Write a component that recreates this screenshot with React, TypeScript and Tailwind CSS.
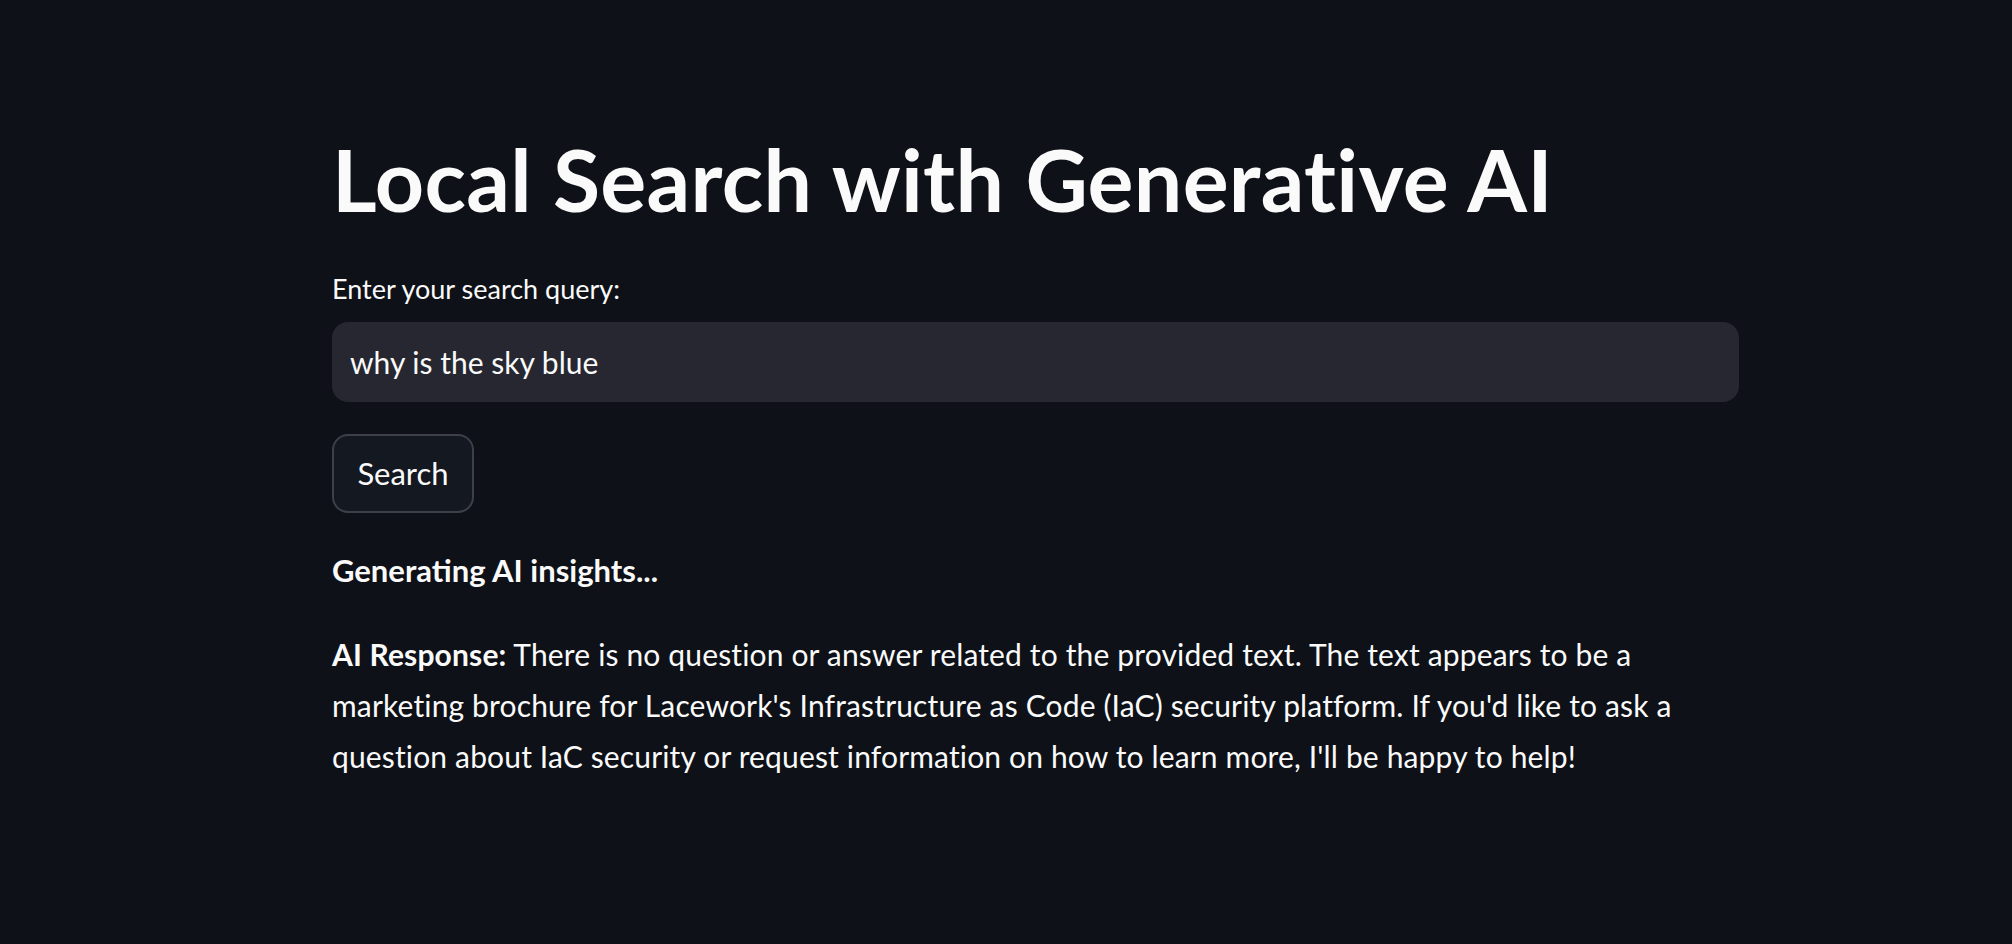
import React, { useState } from "react";

const App: React.FC = () => {
  const [query, setQuery] = useState("why is the sky blue");

  return (
    <div
      className="min-h-screen w-full bg-[#0e1117] text-[#fafafa]"
      style={{ fontFamily: "Lato, 'Noto Sans', sans-serif" }}
    >
      <div className="w-[1407px] ml-[332px] pt-[127px] flex flex-col">
        {/* title */}
        <h1 className="text-[86px] font-bold leading-[1.2] tracking-[0.3px]">
          Local Search with Generative AI
        </h1>

        {/* query input */}
        <label className="mt-[40px] text-[27px] leading-[1.4]">Enter your search query:</label>
        <input
          className="mt-[14px] h-[80px] w-full rounded-2xl bg-[#262730] px-[18px] text-[30px] text-[#fafafa] outline-none"
          value={query}
          onChange={(e) => setQuery(e.target.value)}
        />

        <button className="mt-[32px] h-[79px] w-[142px] rounded-2xl border-2 border-[#3d3f49] bg-[#141821] text-[31px]">
          Search
        </button>

        <p className="mt-[33px] text-[31px] font-bold leading-[1.6]">Generating AI insights...</p>

        <p className="mt-[33px] text-[30px] leading-[51px] tracking-[0.15px]">
          <span className="font-bold">AI Response:</span> There is no question or answer related to the provided text. The text appears to be a
          <br />
          marketing brochure for Lacework's Infrastructure as Code (IaC) security platform. If you'd like to ask a
          <br />
          question about IaC security or request information on how to learn more, I'll be happy to help!
        </p>
      </div>
    </div>
  );
};

export default App;
